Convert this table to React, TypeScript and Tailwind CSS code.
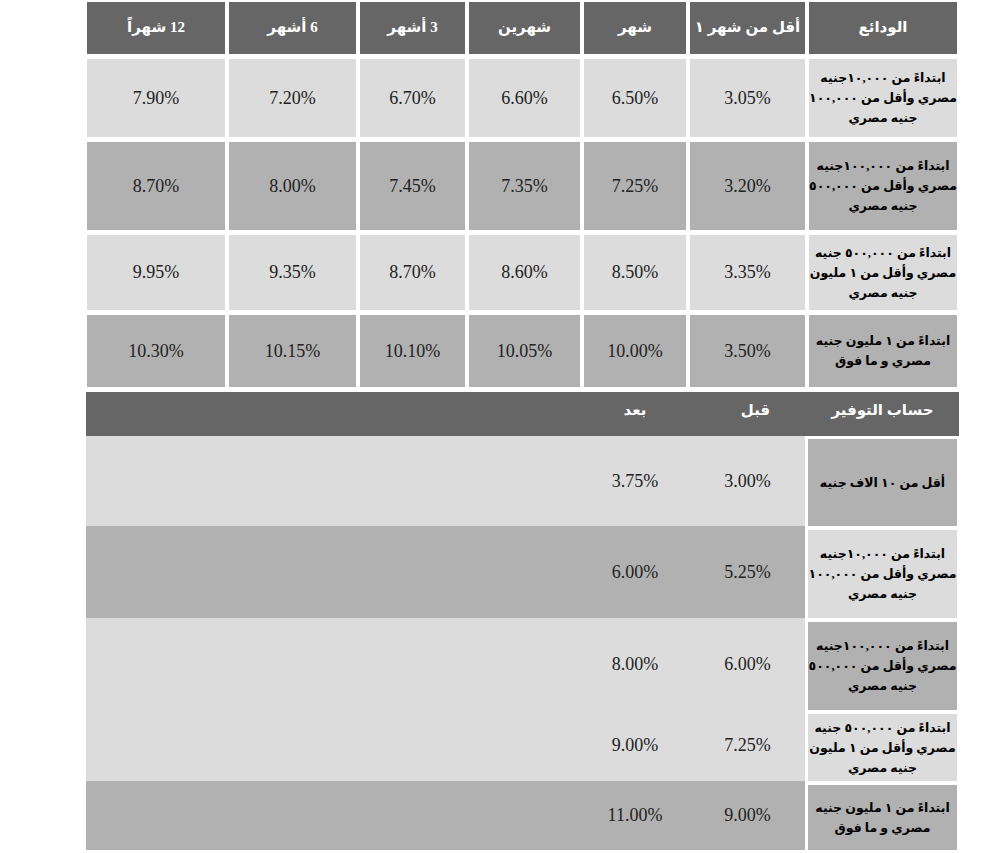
const font = "font-[family-name:'Liberation_Serif','DejaVu_Sans',serif]";

const heads = ["الودائع", "أقل من شهر ١", "شهر", "شهرين", "3 أشهر", "6 أشهر", "12 شهراً"];

const deposits = [
  {
    label: ["ابتداءً من ١٠,٠٠٠جنيه", "مصري وأقل من ١٠٠,٠٠٠", "جنيه مصري"],
    rates: ["3.05%", "6.50%", "6.60%", "6.70%", "7.20%", "7.90%"],
  },
  {
    label: ["ابتداءً من ١٠٠,٠٠٠جنيه", "مصري وأقل من ٥٠٠,٠٠٠", "جنيه مصري"],
    rates: ["3.20%", "7.25%", "7.35%", "7.45%", "8.00%", "8.70%"],
  },
  {
    label: ["ابتداءً من ٥٠٠,٠٠٠ جنيه", "مصري وأقل من ١ مليون", "جنيه مصري"],
    rates: ["3.35%", "8.50%", "8.60%", "8.70%", "9.35%", "9.95%"],
  },
  {
    label: ["ابتداءً من ١ مليون جنيه", "مصري و ما فوق"],
    rates: ["3.50%", "10.00%", "10.05%", "10.10%", "10.15%", "10.30%"],
  },
];

// savings rows: left band colour, right cell colour, height
const savings = [
  { label: ["أقل من ١٠ الاف جنيه"], before: "3.00%", after: "3.75%", band: "bg-[#dcdcdc]", cell: "bg-[#b1b1b1]", h: "h-[90px]", pt: "pt-[3px]" },
  { label: deposits[0].label, before: "5.25%", after: "6.00%", band: "bg-[#b1b1b1]", cell: "bg-[#dcdcdc]", h: "h-[92px]", pt: "pt-[4px]" },
  { label: deposits[1].label, before: "6.00%", after: "8.00%", band: "bg-[#dcdcdc]", cell: "bg-[#b1b1b1]", h: "h-[92px]", pt: "pt-[4px]" },
  { label: deposits[2].label, before: "7.25%", after: "9.00%", band: "bg-[#dcdcdc]", cell: "bg-[#dcdcdc]", h: "h-[71px]", pt: "pt-[4px]" },
  { label: deposits[3].label, before: "9.00%", after: "11.00%", band: "bg-[#b1b1b1]", cell: "bg-[#b1b1b1]", h: "h-[69px]", pt: "pt-[4px]" },
];

const Label = ({ lines }: { lines: string[] }) => (
  <div className="flex flex-col items-center text-[12.5px] leading-[20px] font-bold whitespace-nowrap text-black">
    {lines.map((l) => (
      <span key={l}>{l}</span>
    ))}
  </div>
);

const Rate = ({ value }: { value: string }) => (
  <span className="text-[18px] text-[#222]">{value}</span>
);

export default function App() {
  return (
    <div className="min-h-screen bg-white">
      <div dir="rtl" className={`ml-[86px] w-[873px] pt-[2px] ${font}`}>
        {/* deposits table */}
        <div className="ml-[1px] mr-[2px] grid grid-cols-[148px_115px_102px_111px_105px_127px_138px] grid-rows-[52px_78px_88px_75px_72px] gap-x-[4px] gap-y-[5px]">
          {heads.map((h) => (
            <div
              key={h}
              className="flex items-center justify-center pb-[2px] bg-[#666666] text-[15px] font-bold text-white"
            >
              {h}
            </div>
          ))}
          {deposits.map((row, i) => {
            const bg = i % 2 === 0 ? "bg-[#dcdcdc]" : "bg-[#b1b1b1]";
            return [
              <div key={`l${i}`} className={`flex items-center justify-center text-center ${bg}`}>
                <Label lines={row.label} />
              </div>,
              ...row.rates.map((r, j) => (
                <div key={`r${i}-${j}`} className={`flex items-center justify-center ${bg}`}>
                  <Rate value={r} />
                </div>
              )),
            ];
          })}
        </div>

        {/* savings table */}
        <div className="mt-[5px]">
          <div className="flex h-[44px] items-center pb-[8px] bg-[#666666] text-[15px] font-bold text-white">
            <div className="mr-[2px] w-[149px] text-center">حساب التوفير</div>
            <div className="mr-[3px] w-[115px] pl-[16px] text-center">قبل</div>
            <div className="mr-[4px] w-[102px] text-center">بعد</div>
          </div>
          {savings.map((row, i) => (
            <div key={i} className={`flex ${row.h}`}>
              <div className={`mr-[2px] w-[149px] bg-white ${row.pt}`}>
                <div className={`flex h-full items-center justify-center text-center ${row.cell}`}>
                  <Label lines={row.label} />
                </div>
              </div>
              <div className={`mr-[3px] flex flex-1 items-center ${row.band}`}>
                <div className="w-[115px] text-center">
                  <Rate value={row.before} />
                </div>
                <div className="mr-[4px] w-[102px] text-center">
                  <Rate value={row.after} />
                </div>
              </div>
            </div>
          ))}
        </div>
      </div>
    </div>
  );
}
